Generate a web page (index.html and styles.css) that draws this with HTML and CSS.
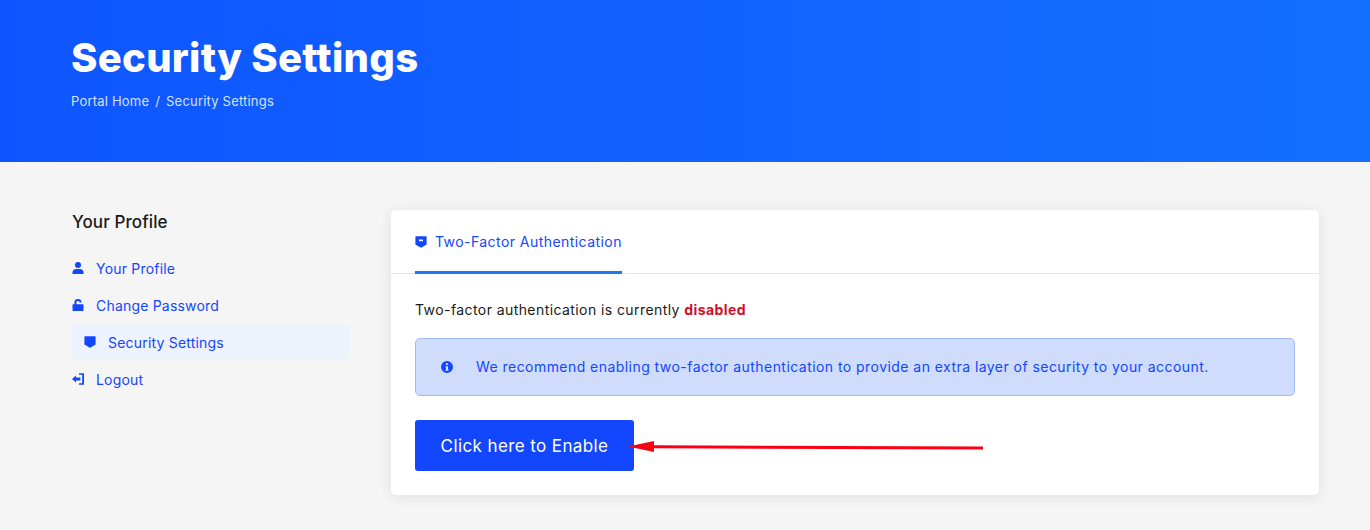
FILE: index.html
```html
<!DOCTYPE html>
<html lang="en">
  <head>
    <meta charset="UTF-8" />
    <meta name="viewport" content="width=device-width, initial-scale=1.0" />
    <title>Security Settings</title>
    <link rel="stylesheet" href="styles.css">
  </head>
  <body>
    <!-- ========== HEADER ========== -->
    <header class="hero">
      <h1>Security Settings</h1>
      <div class="crumbs">
        <a href="#">Portal Home</a>
        <span class="sep">/</span>
        <a href="#">Security Settings</a>
      </div>
    </header>

    <!-- ========== CONTENT ========== -->
    <main class="content">
      <aside class="sidebar">
        <h2>Your Profile</h2>
        <nav class="side-nav">
          <a href="#" class="side-link">
            <svg class="side-icon" viewBox="0 0 12 12"><circle cx="6" cy="3" r="3" /><path d="M.5 12V10.300C.5 8.300 2.200 7 4 7H8c1.800 0 3.500 1.300 3.500 3.300V12Z" /></svg>
            Your Profile
          </a>
          <a href="#" class="side-link">
            <svg class="side-icon" viewBox="0 0 12 12"><rect x=".5" y="5.200" width="11" height="6.800" rx=".8" /><path class="shackle" d="M3.400 6V3.400C3.400 1.900 4.500 1 6 1S8.600 1.900 8.600 3.600" /></svg>
            Change Password
          </a>
          <a href="#" class="side-link active">
            <svg class="side-icon" viewBox="0 0 12 12"><path d="M1 .3H11a.6 .6 0 0 1 .6 .6V8.400L6.600 11.600H5.400L.4 8.400V.9A.6 .6 0 0 1 1 .3Z" /></svg>
            Security Settings
          </a>
          <a href="#" class="side-link">
            <svg class="side-icon" viewBox="0 0 12 12"><path d="M7 .3h4.700a.3 .3 0 0 1 .3 .3v10.800a.3 .3 0 0 1-.3 .3H7V10.200h3.200V1.800H7Z" /><path d="M0 6 4 2.500V4.500H8.400V7.500H4V9.500Z" /></svg>
            Logout
          </a>
        </nav>
      </aside>

      <section class="card">
        <div class="tabs">
          <a href="#" class="tab">
            <svg class="tab-icon" viewBox="0 0 12 12"><path fill-rule="evenodd" d="M1 .3H11a.6 .6 0 0 1 .6 .6V8.400L6.600 11.600H5.400L.4 8.400V.9A.6 .6 0 0 1 1 .3ZM4 3.600V5.200H8V3.600Z" /></svg>
            Two-Factor Authentication
          </a>
        </div>
        <div class="card-body">
          <p class="status">Two-factor authentication is currently <strong>disabled</strong></p>
          <div class="alert">
            <svg class="alert-icon" viewBox="0 0 12 12"><path fill-rule="evenodd" d="M6 0a6 6 0 1 1 0 12A6 6 0 0 1 6 0ZM4.900 2.200V4H7.100V2.200ZM4.400 5.200V6.400H5V8.600H4.400V9.800H7.600V8.600H7V5.200Z" /></svg>
            <span class="alert-text">We recommend enabling two-factor authentication to provide an extra layer of security to your account.</span>
          </div>
          <button type="button" class="btn-enable">Click here to Enable</button>
        </div>
      </section>
    </main>

    <!-- red arrow drawn over the screenshot -->
    <svg class="arrow" viewBox="0 0 356 20" width="356" height="20">
      <path d="M26 5.300 L355 6.500 L355 9.500 L26 8.300 L26 12 L0 6.500 L26 1Z" />
    </svg>
  </body>
</html>
```

FILE: styles.css
```css
* {
  margin: 0;
  padding: 0;
  box-sizing: border-box;
  font-family: "Inter", "Liberation Sans", sans-serif;
}

body {
  background-color: #f5f5f5;
  color: #1a1a1a;
  font-size: 14px;
  position: relative;
}

a {
  text-decoration: none;
}

/* ========== HEADER ========== */
.hero {
  height: 162px;
  padding: 33px 71px 0;
  background: linear-gradient(90deg, #0f55ff, #1370ff);
  color: #fff;
}

.hero h1 {
  font-size: 40px;
  line-height: 50px;
  font-weight: 800;
  letter-spacing: 0.3px;
}

.crumbs {
  display: flex;
  gap: 6px;
  margin-top: 9px;
  font-size: 13px;
  line-height: 18px;
  letter-spacing: 0.2px;
}

.crumbs a,
.crumbs .sep {
  color: #d5e2ff;
}

/* ========== CONTENT ========== */
.content {
  display: flex;
  gap: 41px;
  padding: 48px 51px 35px 72px;
}

.sidebar {
  width: 278px;
  flex-shrink: 0;
}

.sidebar h2 {
  font-size: 17px;
  line-height: 24px;
  font-weight: 500;
  letter-spacing: 0.1px;
  color: #1a1a1a;
}

.side-nav {
  display: flex;
  flex-direction: column;
  gap: 1px;
  margin-top: 16px;
}

.side-link {
  display: flex;
  align-items: center;
  gap: 12px;
  height: 36px;
  color: #1346ff;
  font-size: 14px;
  letter-spacing: 0.2px;
}

.side-link.active {
  padding-left: 12px;
  background-color: #eef2fd;
  border-radius: 5px;
}

.side-icon {
  width: 12px;
  height: 12px;
  fill: #1346ff;
  flex-shrink: 0;
}

.shackle {
  fill: none;
  stroke: #1346ff;
  stroke-width: 2;
}

.card {
  flex: 1;
  height: 285px;
  background-color: #fff;
  border-radius: 5px;
  box-shadow: 0 2px 14px rgba(0, 0, 0, 0.09);
}

.tabs {
  padding: 0 24px;
  height: 64px;
  border-bottom: 1px solid #e6e6e6;
}

.tab {
  display: inline-flex;
  align-items: center;
  gap: 8px;
  height: 64px;
  padding-top: 2px;
  border-bottom: 3px solid #1a7af5;
  color: #1346ff;
  font-size: 14px;
  letter-spacing: 0.44px;
}

.tab-icon {
  width: 12px;
  height: 12px;
  fill: #1346ff;
}

.card-body {
  padding: 25px 24px 24px;
}

.status {
  line-height: 21px;
  letter-spacing: 0.42px;
  color: #1a1a1a;
}

.status strong {
  color: #d0112b;
  font-weight: 700;
}

.alert {
  display: flex;
  align-items: center;
  gap: 23px;
  height: 58px;
  margin-top: 18px;
  padding-left: 25px;
  background-color: #cfdcfc;
  border: 1px solid #a1baf9;
  border-radius: 5px;
  color: #1346ff;
  letter-spacing: 0.45px;
}

.alert-icon {
  width: 12px;
  height: 12px;
  fill: #1346ff;
  margin-bottom: 1px;
}

.alert-text {
  margin-bottom: 2px;
}

.btn-enable {
  display: block;
  width: 219px;
  height: 51px;
  margin-top: 24px;
  background-color: #1346ff;
  border: none;
  border-radius: 3px;
  color: #fff;
  font-size: 17px;
  font-weight: 400;
  letter-spacing: 0.4px;
  cursor: pointer;
}

.arrow {
  position: absolute;
  left: 628px;
  top: 440px;
  fill: #fb0012;
}
```
